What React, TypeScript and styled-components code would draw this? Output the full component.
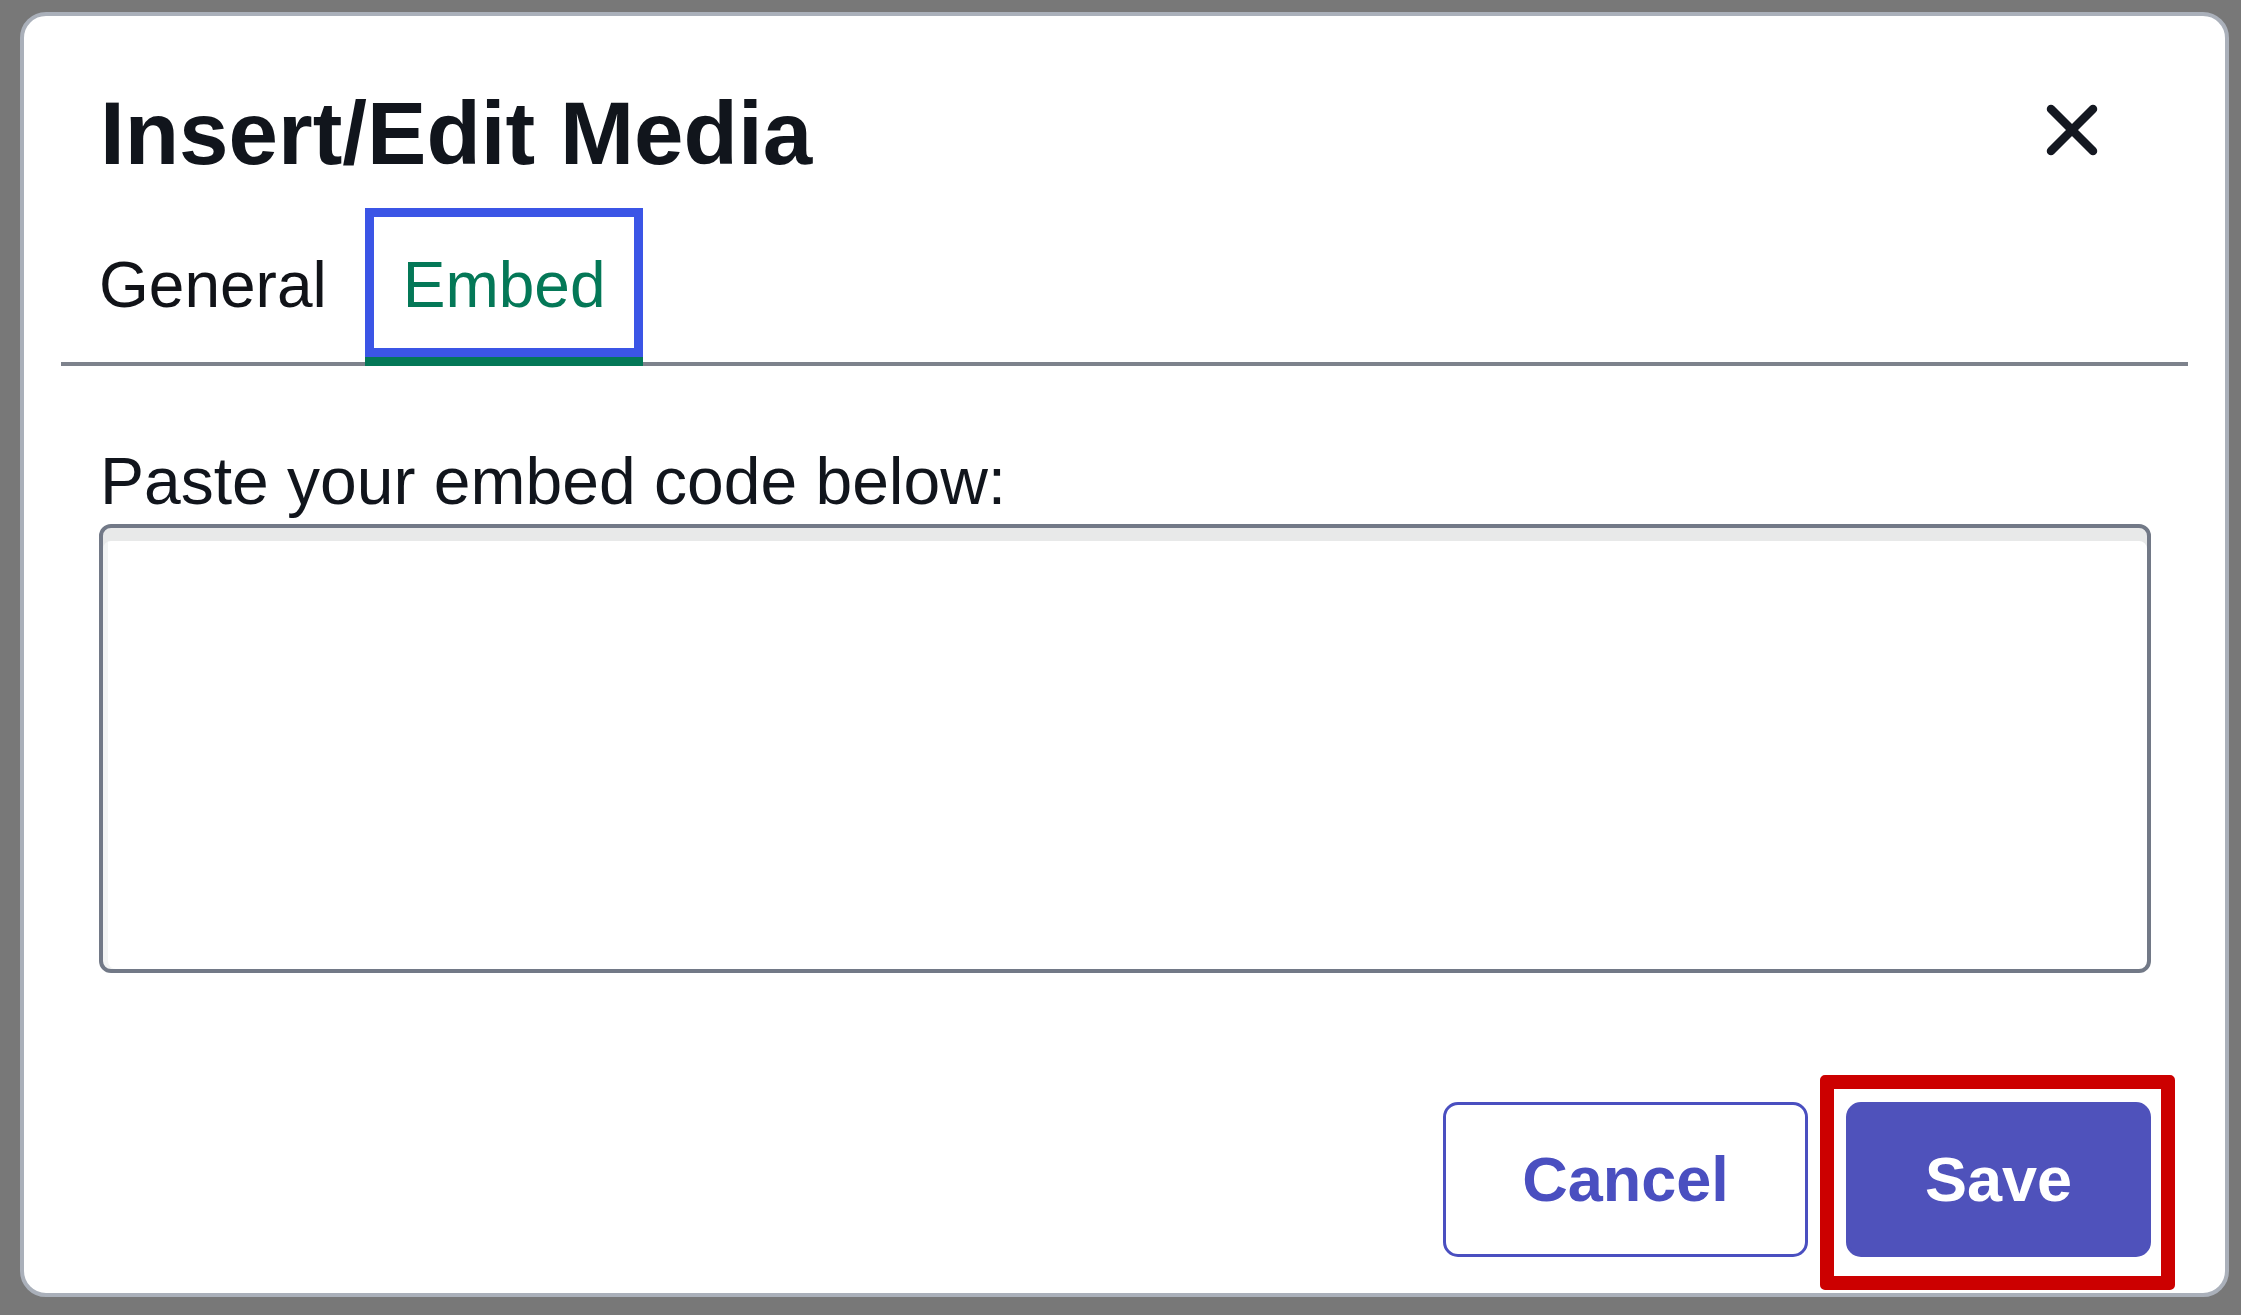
import React from "react";
import styled, { createGlobalStyle } from "styled-components";

const GlobalStyle = createGlobalStyle`
  html, body {
    margin: 0;
    padding: 0;
    background: #787878;
  }
  * {
    box-sizing: border-box;
  }
`;

const Backdrop = styled.div`
  display: flex;
  height: 100vh;
  padding: 12px 12px 18px 20px;
  font-family: "Liberation Sans", Arial, sans-serif;
`;

const Dialog = styled.div`
  flex: 1;
  display: flex;
  flex-direction: column;
  background: #fff;
  border: 4px solid #aab0ba;
  border-radius: 26px;
  overflow: hidden;
`;

const Header = styled.div`
  display: flex;
  align-items: center;
  justify-content: space-between;
  padding: 64px 127px 0 76px;
`;

const Title = styled.h1`
  margin: 0;
  font-size: 89px;
  line-height: 107px;
  font-weight: 700;
  color: #11151c;
`;

const CloseButton = styled.button`
  display: flex;
  padding: 0;
  margin-bottom: 7px;
  border: 0;
  background: none;
  cursor: pointer;
`;

const TabList = styled.div`
  display: flex;
  align-items: flex-end;
  margin: 21px 37px 0;
  box-shadow: inset 0 -4px 0 #7d828c;
`;

const Tab = styled.button<{ $active?: boolean }>`
  padding: 39px 38px 33px;
  border: 0;
  border-bottom: 9px solid ${(p) => (p.$active ? "#047857" : "transparent")};
  background: transparent;
  font-family: inherit;
  font-size: 64px;
  line-height: 1.2;
  color: ${(p) => (p.$active ? "#047857" : "#111318")};
  box-shadow: ${(p) => (p.$active ? "inset 0 0 0 9px #3b55e6" : "none")};
  cursor: pointer;
`;

const Body = styled.div`
  display: flex;
  flex-direction: column;
  padding: 0 74px 0 75px;
`;

const Label = styled.label`
  margin: 76px 0 0 1px;
  font-size: 66px;
  line-height: 78px;
  color: #11151c;
`;

const EmbedInput = styled.textarea`
  width: 100%;
  height: 449px;
  margin-top: 4px;
  border: 4px solid #727987;
  border-radius: 12px;
  background: #fff;
  box-shadow: inset 0 13px 0 #e8e9e9, inset 5px 0 0 #f3f4f4;
  resize: none;
  outline: none;
`;

const Footer = styled.div`
  display: flex;
  justify-content: flex-end;
  align-items: flex-start;
  gap: 12px;
  margin-top: 102px;
  padding-right: 50px;
`;

const FocusRing = styled.div`
  padding: 13px 10px 19px 12px;
  border: 14px solid #cc0000;
  border-radius: 5px;
`;

const Button = styled.button<{ $primary?: boolean }>`
  height: 155px;
  border-radius: 15px;
  border: 3px solid #4a4fc0;
  background: ${(p) => (p.$primary ? "#4f52bb" : "#fff")};
  color: ${(p) => (p.$primary ? "#fff" : "#4a4fc0")};
  font-family: inherit;
  font-size: 63px;
  font-weight: 700;
  cursor: pointer;
`;

const CancelButton = styled(Button)`
  width: 365px;
  margin-top: 27px;
`;

const SaveButton = styled(Button)`
  width: 305px;
  border-color: #4f52bb;
`;

const CloseIcon = () => (
  <svg width="52" height="52" viewBox="0 0 52 52" aria-hidden="true">
    <path
      d="M5 5 L47 47 M47 5 L5 47"
      stroke="#141821"
      strokeWidth="8.5"
      strokeLinecap="round"
      fill="none"
    />
  </svg>
);

export default function App() {
  return (
    <>
      <GlobalStyle />
      <Backdrop>
        <Dialog role="dialog" aria-label="Insert/Edit Media">
          <Header>
            <Title>Insert/Edit Media</Title>
            <CloseButton aria-label="Close">
              <CloseIcon />
            </CloseButton>
          </Header>
          <TabList role="tablist">
            <Tab role="tab">General</Tab>
            <Tab role="tab" $active>
              Embed
            </Tab>
          </TabList>
          <Body>
            <Label htmlFor="embed-code">Paste your embed code below:</Label>
            <EmbedInput id="embed-code" />
          </Body>
          <Footer>
            <CancelButton>Cancel</CancelButton>
            <FocusRing>
              <SaveButton $primary>Save</SaveButton>
            </FocusRing>
          </Footer>
        </Dialog>
      </Backdrop>
    </>
  );
}
